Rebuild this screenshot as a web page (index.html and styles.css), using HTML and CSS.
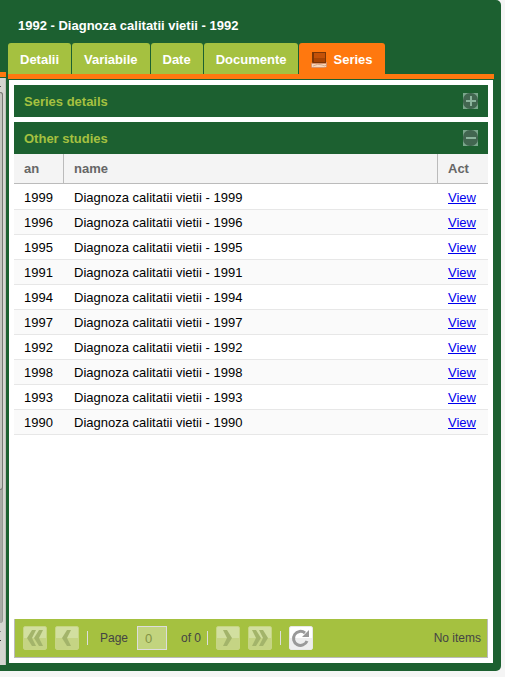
FILE: index.html
```html
<!DOCTYPE html>
<html lang="ro">
<head>
<meta charset="utf-8">
<title>1992 - Diagnoza calitatii vietii - 1992</title>
<meta name="viewport" content="width=device-width, initial-scale=1">
<link rel="stylesheet" href="styles.css">
</head>
<body>
<div class="window">
  <aside class="side" aria-hidden="true">
    <div class="side-bar"></div>
    <div class="side-body">
      <div class="side-arrow"></div>
      <div class="side-track"><div class="side-thumb"></div></div>
      <div class="side-arrow side-arrow-end"></div>
    </div>
  </aside>
  <main class="main">
    <h1 class="title">1992 - Diagnoza calitatii vietii - 1992</h1>
    <nav class="tabs">
      <a class="tab" href="#detalii">Detalii</a>
      <a class="tab" href="#variabile">Variabile</a>
      <a class="tab" href="#date">Date</a>
      <a class="tab" href="#documente">Documente</a>
      <a class="tab tab-active" href="#series">
        <svg class="book" viewBox="0 0 16 16" aria-hidden="true">
          <path d="M0 11 3 10h13v5l-3 1H1L0 15z" fill="#d9926a"/>
          <path d="M1 12h14v3H1z" fill="#f8d9bd"/>
          <path d="M2 14q5-3 9-1t4 0" fill="none" stroke="#d8a888"/>
          <path d="M3 1h12v9H3z" fill="#c45108"/>
          <path d="M3 6h12v4H3z" fill="#a84404"/>
          <path d="M1 0h2v10l-2 1zM1 0h14v1H1z" fill="#7d3606"/>
          <path d="M14 1h1v9h-1zM2 10h13v1H2z" fill="#7d3606"/>
        </svg>
        <span>Series</span>
      </a>
    </nav>
    <div class="panel">
      <button class="bar" type="button" aria-expanded="false">
        <span>Series details</span>
        <svg class="toggle" viewBox="0 0 15 16" aria-hidden="true">
          <path d="M0 0h15v16H0z" fill="#7aa68b"/>
          <rect width="15" height="16" rx="7" fill="#426650"/>
          <path d="M3 8h10M8 3v10" fill="none" stroke="#8bb39c" stroke-width="2"/>
        </svg>
      </button>
      <section class="studies">
        <button class="bar" type="button" aria-expanded="true">
          <span>Other studies</span>
          <svg class="toggle" viewBox="0 0 15 16" aria-hidden="true">
            <path d="M0 0h15v16H0z" fill="#7aa68b"/>
            <rect width="15" height="16" rx="7" fill="#426650"/>
            <path d="M3 8h10" fill="none" stroke="#8bb39c" stroke-width="2"/>
          </svg>
        </button>
        <table class="grid">
          <thead><tr><th class="year">an</th><th>name</th><th class="act">Act</th></tr></thead>
          <tbody>
            <tr><td>1999</td><td>Diagnoza calitatii vietii - 1999</td><td><a href="#1999">View</a></td></tr>
            <tr><td>1996</td><td>Diagnoza calitatii vietii - 1996</td><td><a href="#1996">View</a></td></tr>
            <tr><td>1995</td><td>Diagnoza calitatii vietii - 1995</td><td><a href="#1995">View</a></td></tr>
            <tr><td>1991</td><td>Diagnoza calitatii vietii - 1991</td><td><a href="#1991">View</a></td></tr>
            <tr><td>1994</td><td>Diagnoza calitatii vietii - 1994</td><td><a href="#1994">View</a></td></tr>
            <tr><td>1997</td><td>Diagnoza calitatii vietii - 1997</td><td><a href="#1997">View</a></td></tr>
            <tr><td>1992</td><td>Diagnoza calitatii vietii - 1992</td><td><a href="#1992">View</a></td></tr>
            <tr><td>1998</td><td>Diagnoza calitatii vietii - 1998</td><td><a href="#1998">View</a></td></tr>
            <tr><td>1993</td><td>Diagnoza calitatii vietii - 1993</td><td><a href="#1993">View</a></td></tr>
            <tr><td>1990</td><td>Diagnoza calitatii vietii - 1990</td><td><a href="#1990">View</a></td></tr>
          </tbody>
        </table>
      </section>
      <footer class="pager">
        <div class="pager-group">
          <button class="page-button" type="button" aria-label="First page" disabled><svg viewBox="0 0 22 22"><path d="M8 3h4l-4 8 4 8H8l-5-8zM15 3h4l-4 8 4 8h-4l-5-8z"/></svg></button>
          <button class="page-button" type="button" aria-label="Previous page" disabled><svg viewBox="0 0 22 22"><path d="M11 3h4l-4 8 4 8h-4l-5-8z"/></svg></button>
        </div>
        <label class="page-label" for="page">Page</label>
        <input class="page-input" id="page" type="text" value="0" disabled>
        <span class="page-total">of 0</span>
        <div class="pager-group pager-next">
          <button class="page-button" type="button" aria-label="Next page" disabled><svg viewBox="0 0 22 22"><path d="M10 3H6l4 8-4 8h4l5-8z"/></svg></button>
          <button class="page-button" type="button" aria-label="Last page" disabled><svg viewBox="0 0 22 22"><path d="M7 3H3l4 8-4 8h4l5-8zM14 3h-4l4 8-4 8h4l5-8z"/></svg></button>
        </div>
        <button class="page-button refresh" type="button" aria-label="Refresh"><svg viewBox="0 0 22 22"><path d="M15 6a7 7 0 1 0 2 8" fill="none" stroke="#999" stroke-width="3"/><path d="M19 3v7h-7z"/></svg></button>
        <span class="status">No items</span>
      </footer>
    </div>
  </main>
</div>
</body>
</html>
```

FILE: styles.css
```css
* { box-sizing: border-box; }

body {
  margin: 0;
  min-height: 100vh;
  display: flex;
  padding: 0 4px 6px 0;
  background: #f5f5f5;
  color: #000;
  font: 13px/16px "Liberation Sans", Arial, sans-serif;
}

.window {
  flex: 1;
  min-width: 0;
  display: flex;
  gap: 2px;
  padding-right: 7px;
  background: #1c6030;
  border-radius: 0 5px 5px 0;
}

.side {
  width: 6px;
  padding: 72px 0 6px;
  display: flex;
  flex-direction: column;
}

.side-bar {
  height: 6px;
  background: #ff780f;
  border-bottom: 1px solid #1c6030;
}

.side-body {
  flex: 1;
  display: flex;
  flex-direction: column;
  padding-right: 3px;
  background: #d4d6d0;
  border-right: 1px solid #bfc1bb;
}

.side-arrow {
  height: 14px;
  background: linear-gradient(#555, #555) left 8px / 1px 1px no-repeat;
}

.side-arrow-end {
  height: 42px;
  background:
    linear-gradient(#888, #888) left 8px / 1px 1px no-repeat,
    linear-gradient(#333, #333) left 17px / 1px 1px no-repeat;
}

.side-track {
  flex: 1;
  margin-right: -1px;
  background: #a8aaa5;
  border-right: 1px solid #969893;
  border-radius: 0 3px 3px 0;
}

.side-thumb {
  height: 75%;
  margin-right: -1px;
  background: #c4c6c0;
  border: solid #777a74;
  border-width: 1px 1px 1px 0;
  border-radius: 0 3px 3px 0;
}

.main {
  flex: 1;
  min-width: 0;
  display: flex;
  flex-direction: column;
  padding-bottom: 8px;
}

.title {
  margin: 0;
  padding: 18px 10px 9px;
  color: #fff;
  font-size: 13px;
  line-height: 16px;
}

.tabs {
  display: flex;
  gap: 1px;
  border-bottom: 5px solid #ff780f;
}

.tab {
  display: flex;
  align-items: center;
  gap: 6px;
  height: 31px;
  padding: 2px 12px 0;
  border-radius: 3px 3px 0 0;
  background: #a5c140;
  color: #fff;
  font-weight: bold;
  text-decoration: none;
}

.tab-active { background: #ff780f; }

.book { width: 16px; height: 16px; }

.panel {
  flex: 1;
  display: flex;
  flex-direction: column;
  gap: 5px;
  margin: 1px 1px 0;
  padding: 5px;
  background: #fff;
}

.bar {
  display: flex;
  align-items: center;
  justify-content: space-between;
  width: 100%;
  height: 32px;
  padding: 0 10px;
  border: 0;
  background: #1c6030;
  color: #a5c140;
  font: bold 13px/16px "Liberation Sans", Arial, sans-serif;
}

.bar span { padding-top: 2px; }

.toggle { width: 15px; height: 16px; }

.studies { flex: 1; }

.grid {
  width: 100%;
  border-spacing: 0;
  table-layout: fixed;
}

.grid th {
  height: 30px;
  padding: 0 10px;
  background: #f4f4f4;
  border-right: 1px solid #bbb;
  border-bottom: 1px solid #bbb;
  color: #666;
  text-align: left;
}

.grid th:last-child { border-right: 0; }

.year { width: 50px; }
.act { width: 50px; }

.grid td {
  height: 25px;
  padding: 2px 10px 0;
  border-bottom: 1px solid #e7e7e7;
}

.grid tbody tr:first-child td { border-top: 1px solid #fff; height: 26px; }

.grid tbody tr:nth-child(even) td { background: #fafafa; }

.grid a { color: #00e; }

.pager {
  display: flex;
  align-items: center;
  height: 39px;
  padding: 0 6px 0 8px;
  border: solid #bbb;
  border-width: 0 1px 1px;
  background: #a5c140;
  color: #444;
  font-size: 12px;
}

.pager-group {
  display: flex;
  gap: 8px;
  padding-right: 9px;
  background: linear-gradient(#ddd, #ddd) right center / 1px 14px no-repeat;
}

.page-button {
  width: 24px;
  height: 24px;
  padding: 0;
  border: 1px solid #c6d583;
  border-radius: 2px;
  background: linear-gradient(#d2dfa0 50%, #c5d484 50%);
}

.page-button svg {
  display: block;
  width: 22px;
  height: 22px;
  fill: #a3b46a;
}

.page-label { margin: 0 9px 0 12px; }

.page-input {
  width: 30px;
  height: 24px;
  padding: 0 7px;
  border: 1px solid #ddd;
  background: #c2d47e;
  color: #839344;
  font: 13px/16px "Liberation Sans", Arial, sans-serif;
}

.page-total { margin: 0 6px 0 14px; }

.pager-next {
  padding-left: 9px;
  background:
    linear-gradient(#ddd, #ddd) left center / 1px 14px no-repeat,
    linear-gradient(#ddd, #ddd) right center / 1px 14px no-repeat;
}

.refresh {
  margin-left: 8px;
  border-color: #e8e8e8;
  background: linear-gradient(#fff 50%, #eee 50%);
}

.refresh svg { fill: #999; }

.status { margin-left: auto; }
```
